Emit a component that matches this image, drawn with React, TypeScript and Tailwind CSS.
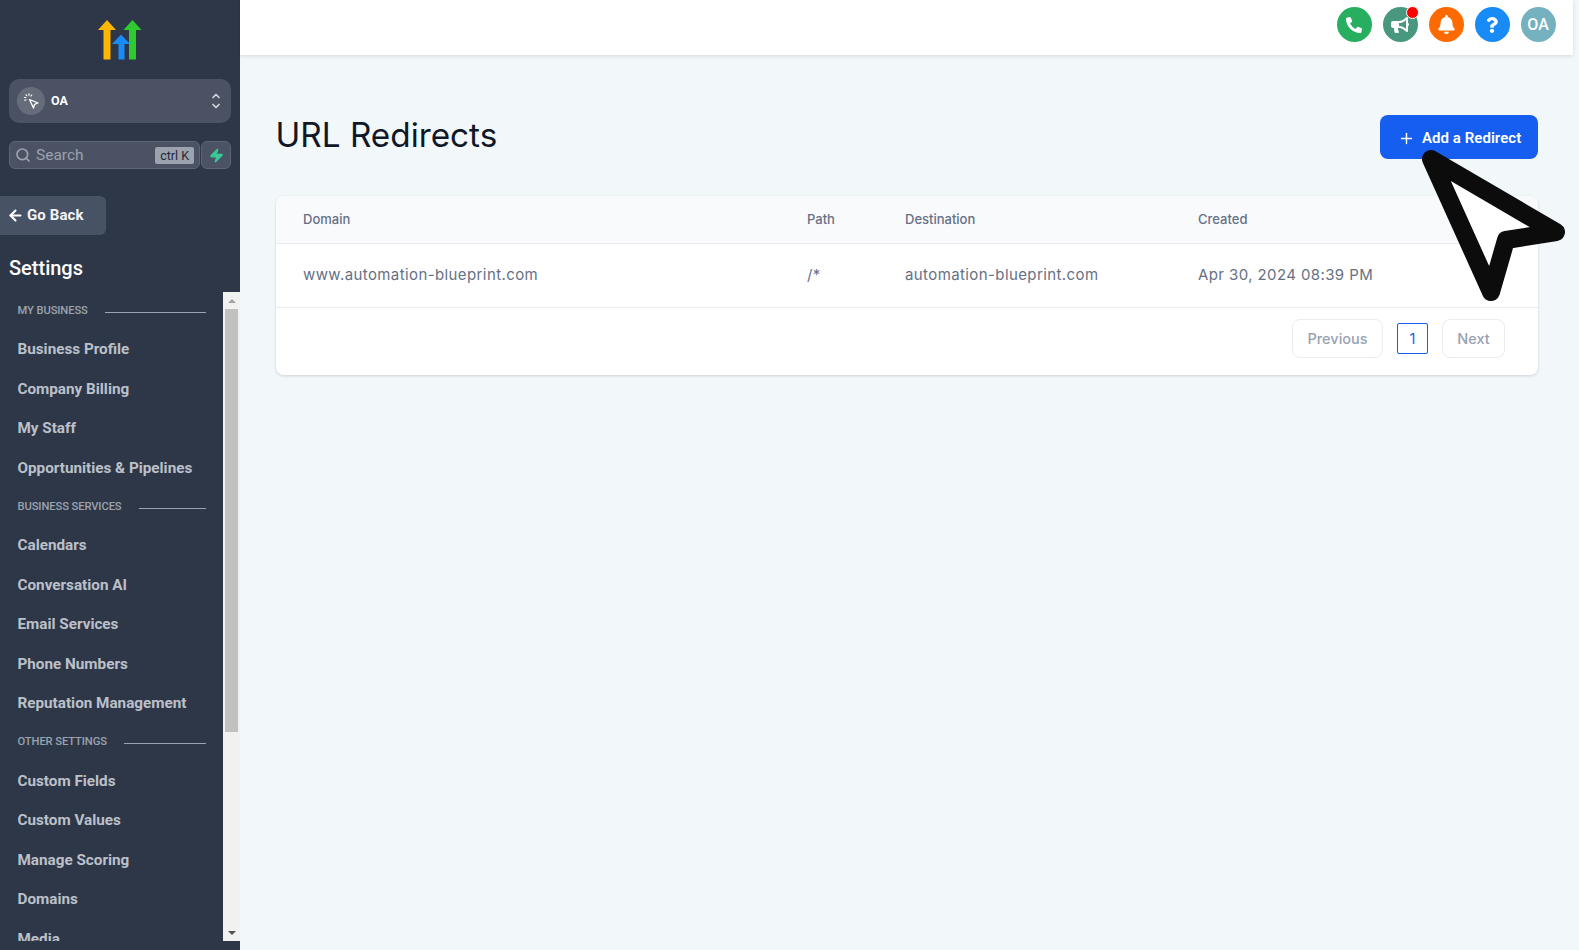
import { FaBell, FaBullhorn, FaPhoneAlt, FaQuestion } from "react-icons/fa";
import { ArrowLeft, ChevronDown, ChevronUp, Plus, Search, Zap } from "lucide-react";

type Entry = { label: string } | string;

const entries: Entry[] = [
  { label: "MY BUSINESS" },
  "Business Profile",
  "Company Billing",
  "My Staff",
  "Opportunities & Pipelines",
  { label: "BUSINESS SERVICES" },
  "Calendars",
  "Conversation AI",
  "Email Services",
  "Phone Numbers",
  "Reputation Management",
  { label: "OTHER SETTINGS" },
  "Custom Fields",
  "Custom Values",
  "Manage Scoring",
  "Domains",
  "Media",
];

function Logo() {
  return (
    <svg width="46" height="42" viewBox="0 0 46 42" className="block">
      <path d="M14 0L23 10H17.5V39.5H10.5V10H5Z" transform="translate(-5 0)" fill="#ffb600" />
      <path d="M14 0L23 10H17.5V39.5H10.5V10H5Z" transform="translate(20.5 0)" fill="#2ecb2e" />
      <path d="M20 14.5L29 24H23.5V39.5H17.5V24H11Z" transform="translate(3 0)" fill="#188bf6" />
    </svg>
  );
}

function ClickCursor() {
  return (
    <svg width="16" height="16" viewBox="0 0 16 16" fill="none" stroke="#fff">
      <path d="M6.5 6.5L15 10L11.5 11.3L10.5 15Z" strokeWidth="1.3" strokeLinejoin="round" />
      <path
        d="M1.5 4.5H2.8M3 1.8L3.8 2.7M6 .8V2.2M8.8 2L8 3M1.8 7.3L3 6.8"
        strokeWidth="1.2"
        strokeLinecap="round"
      />
    </svg>
  );
}

function Sidebar() {
  return (
    <aside className="flex h-[950px] w-[240px] shrink-0 flex-col bg-[#2d3748] font-[Roboto,sans-serif]">
      <div className="flex justify-center pl-[2px] pt-[20px]">
        <Logo />
      </div>
      <div className="mx-[9px] mt-[17px] flex h-[44px] items-center rounded-[10px] bg-[#4a5263] pl-[8px] pr-[9px]">
        <div className="flex size-[28px] items-center justify-center rounded-full bg-[#656c7a]">
          <ClickCursor />
        </div>
        <span className="ml-[6px] flex-1 text-[12.5px] font-bold text-white">OA</span>
        <div className="flex flex-col text-[#d1d5db]">
          <ChevronUp size={12} strokeWidth={3.5} />
          <ChevronDown size={12} strokeWidth={3.5} className="-mt-[1.5px]" />
        </div>
      </div>
      <div className="mx-[9px] mt-[18px] flex h-[28px] gap-[1px]">
        <div className="flex flex-1 items-center rounded-[6px] border border-[#5d6574] bg-[#4a5263] pl-[5px] pr-[5px]">
          <Search size={16} strokeWidth={2.5} className="text-[#9ca3af]" />
          <span className="ml-[5px] flex-1 pt-[1px] text-[15.5px] text-[#9ca3af]">Search</span>
          <span className="rounded-[2px] bg-[#9ca3af] px-[5px] text-[12.5px] leading-[17px] text-[#1f2937]">ctrl K</span>
        </div>
        <div className="flex w-[30px] items-center justify-center rounded-[6px] border border-[#5d6574] bg-[#4a5263]">
          <Zap size={15} fill="#37ca94" stroke="#37ca94" />
        </div>
      </div>
      <div className="mt-[27px] flex h-[39px] w-[106px] items-center rounded-r-[6px] bg-[#475365] pl-[7px] text-[15px] font-bold text-white">
        <ArrowLeft size={17} strokeWidth={3} />
        <span className="ml-[3px] tracking-[0.1px] text-[#f3f4f6]">Go Back</span>
      </div>
      <div className="mt-[20px] h-[26px] pl-[9px] text-[20px] font-medium leading-[26px] text-white">Settings</div>
      <div className="mt-[11px] flex h-[649px] overflow-hidden">
        <div className="flex-1 overflow-hidden pl-[17.5px] pr-[17px]">
          {entries.map((e) =>
            typeof e === "string" ? (
              <div key={e} className="h-[39.5px] text-[15.25px] font-bold leading-[39.5px] whitespace-nowrap text-[#bcc0c9]">
                {e}
              </div>
            ) : (
              <div key={e.label} className="flex h-[38px] items-center gap-[17px] text-[11.2px] font-medium text-[#9ca3af]">
                <span className="whitespace-nowrap tracking-[-0.1px]">{e.label}</span>
                <span className="mt-[2px] h-px flex-1 bg-[#9ca3af]" />
              </div>
            ),
          )}
        </div>
        <div className="flex w-[17px] shrink-0 flex-col items-center bg-[#f1f1f1]">
          <div className="flex h-[17px] w-full items-center justify-center">
            <span className="h-0 w-0 border-x-[4px] border-b-[4px] border-x-transparent border-b-[#a3a3a3]" />
          </div>
          <div className="h-[423px] w-[13px] bg-[#c1c1c1]" />
          <div className="flex-1" />
          <div className="flex h-[17px] w-full items-center justify-center">
            <span className="h-0 w-0 border-x-[4px] border-t-[4px] border-x-transparent border-t-[#505050]" />
          </div>
        </div>
      </div>
    </aside>
  );
}

function Round({ bg, children }: { bg: string; children: React.ReactNode }) {
  return (
    <div className={`relative flex size-[35px] items-center justify-center rounded-full text-white ${bg}`}>{children}</div>
  );
}

function Header() {
  return (
    <header className="flex h-[55px] w-[1333px] items-center justify-end gap-[11px] bg-white pb-[6px] pr-[17.5px] shadow-[0_1px_4px_rgba(0,0,0,0.12)]">
      <Round bg="bg-[#27ae60]">
        <FaPhoneAlt size={16} />
      </Round>
      <Round bg="bg-[#48977f]">
        <FaBullhorn size={18} />
        <span className="absolute right-[-1px] top-[-1px] size-[13px] rounded-full border border-white bg-[#ff0000]" />
      </Round>
      <Round bg="bg-[#ff6a00]">
        <FaBell size={19} />
      </Round>
      <Round bg="bg-[#188bf6]">
        <FaQuestion size={16} />
      </Round>
      <Round bg="bg-[#76b1bf]">
        <span className="font-[Roboto,sans-serif] text-[16px] font-medium">OA</span>
      </Round>
    </header>
  );
}

function Main() {
  return (
    <main className="flex-1 font-[Inter,sans-serif]">
      <Header />
      <div className="pl-[36px] pr-[41px] pt-[60px]">
        <div className="flex items-center justify-between">
          <h1 className="-ml-[0.5px] -translate-y-[2px] text-[33.3px] font-normal leading-[40px] text-[#101828]">URL Redirects</h1>
          <button className="flex h-[44px] w-[158px] items-center rounded-[8px] bg-[#155eef] pb-0 pl-[18px] pt-[2px] font-[Roboto,sans-serif] text-[15px] font-semibold text-white">
            <Plus size={17} strokeWidth={2} />
            <span className="ml-[7px] tracking-[0.05px]">Add a Redirect</span>
          </button>
        </div>
        <div className="mt-[37px] overflow-hidden rounded-[8px] bg-white shadow-[0_1px_3px_rgba(16,24,40,0.16)]">
          <div className="grid h-[48px] grid-cols-[504px_98px_293px_1fr] items-center border-b border-[#eaecf0] bg-[#f9fafb] pl-[27px] text-[13px] font-medium text-[#667085]">
            <span>Domain</span>
            <span>Path</span>
            <span>Destination</span>
            <span>Created</span>
          </div>
          <div className="grid h-[64px] grid-cols-[504px_98px_293px_1fr] items-center border-b border-[#eaecf0] pl-[27px] text-[15px] tracking-[0.4px] text-[#667085]">
            <span>www.automation-blueprint.com</span>
            <span>/*</span>
            <span>automation-blueprint.com</span>
            <span>Apr 30, 2024 08:39 PM</span>
          </div>
          <div className="flex h-[67px] items-start justify-end pr-[33px] pt-[11px] text-[14.5px] font-medium text-[#98a2b3]">
            <div className="flex h-[39px] items-center">
              <span className="flex h-[39px] w-[91px] items-center justify-center rounded-[8px] border border-[#eaecf0]">Previous</span>
              <span className="ml-[14px] flex h-[31px] w-[31px] items-center justify-center rounded-[2px] border border-[#155eef] font-normal text-[#155eef]">1</span>
              <span className="ml-[14px] flex h-[39px] w-[63px] items-center justify-center rounded-[8px] border border-[#eaecf0]">Next</span>
            </div>
          </div>
        </div>
      </div>
    </main>
  );
}

export default function App() {
  return (
    <div className="relative flex h-[950px] w-[1579px] overflow-hidden bg-[#f2f7fa]">
      <Sidebar />
      <Main />
      <svg className="absolute left-[1410px] top-[140px]" width="169" height="180" viewBox="1410 140 169 180">
        <path
          d="M1431 159L1556 232L1506 240L1491 292Z"
          fill="#fff"
          stroke="#0c0c0c"
          strokeWidth="18"
          strokeLinejoin="round"
        />
      </svg>
    </div>
  );
}
